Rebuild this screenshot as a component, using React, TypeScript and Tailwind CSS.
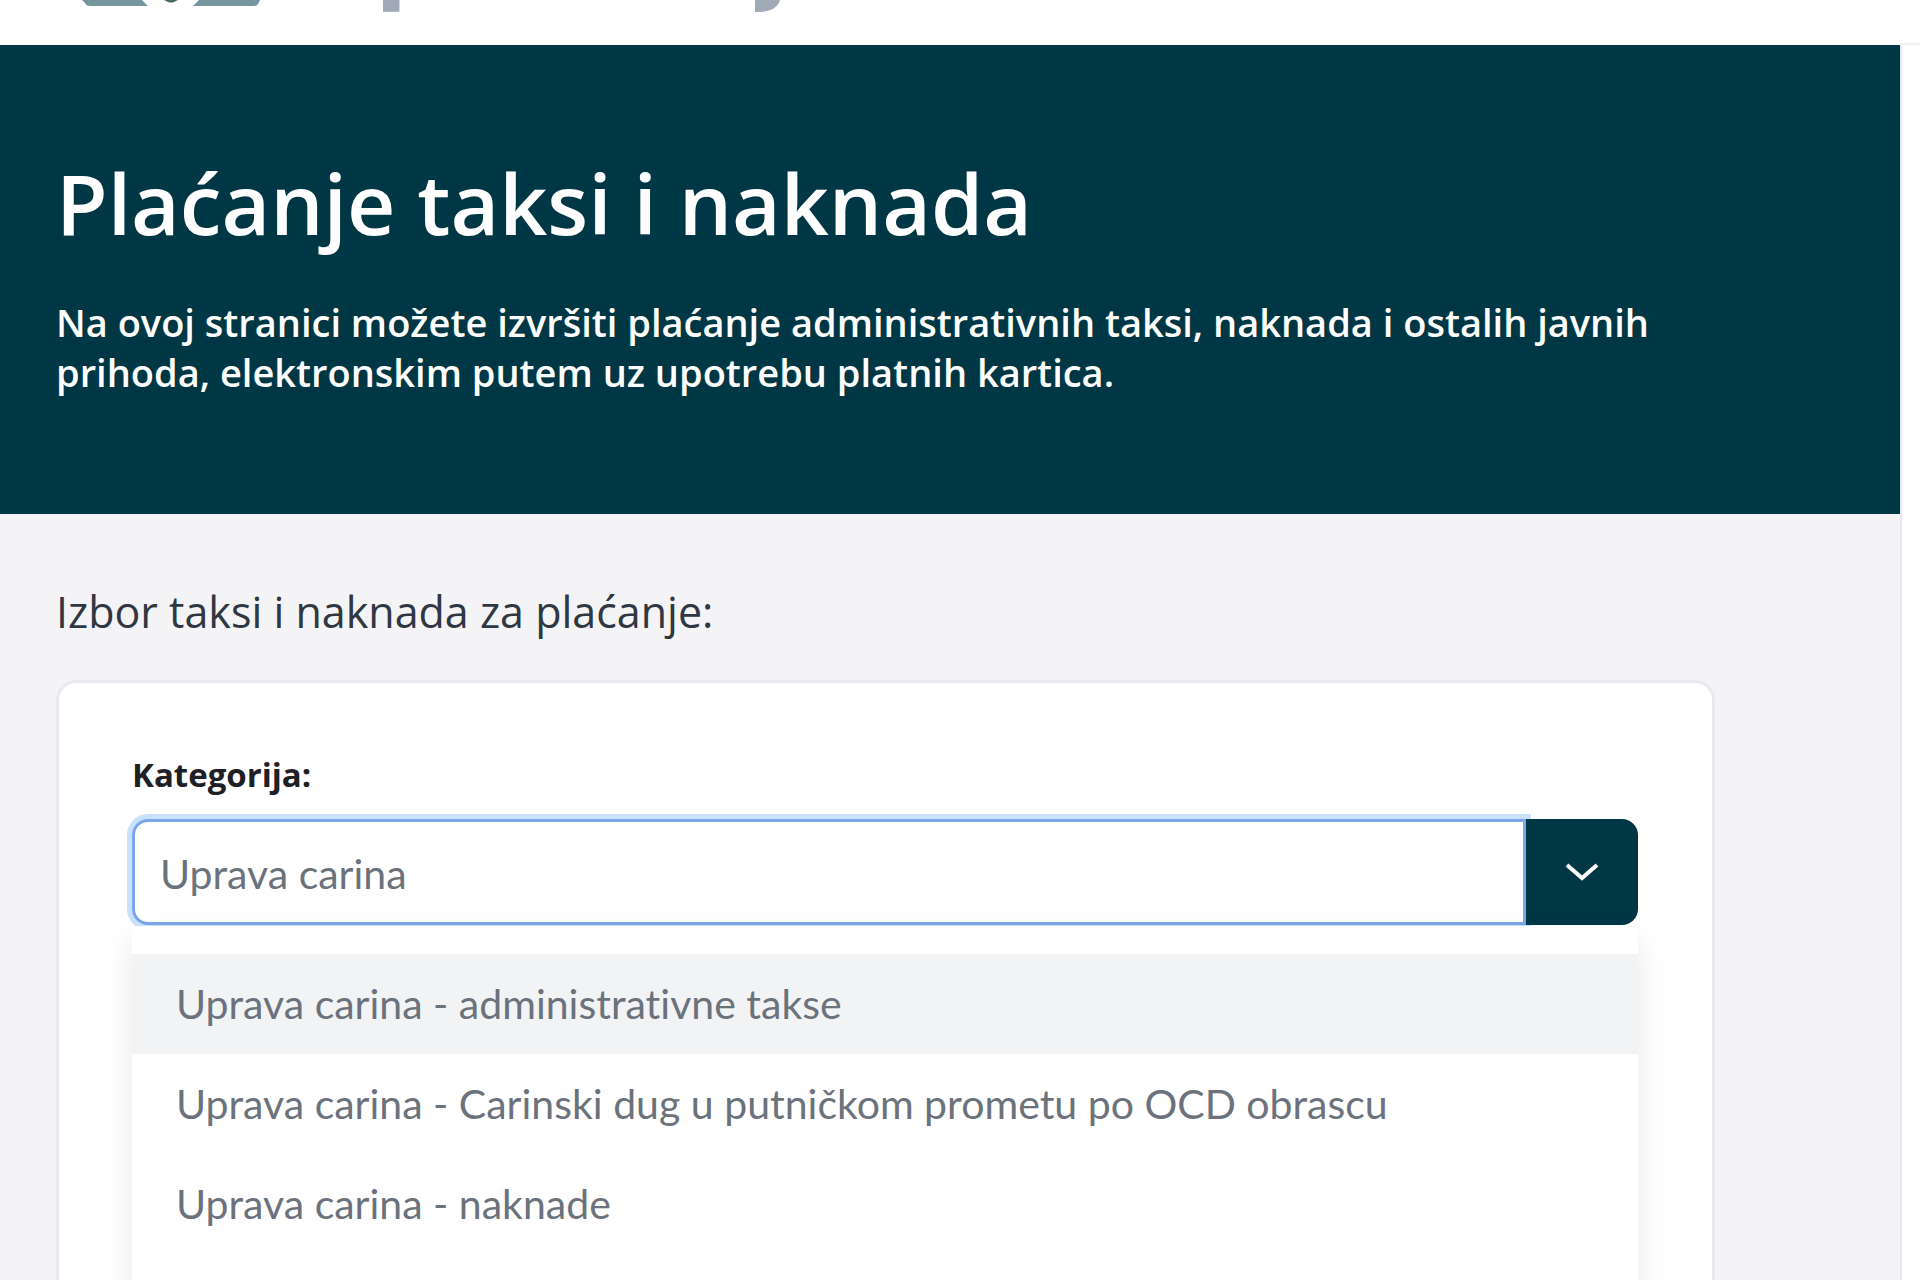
import { useState } from "react";

const CATEGORIES = [
  "Uprava carina - administrativne takse",
  "Uprava carina - Carinski dug u putničkom prometu po OCD obrascu",
  "Uprava carina - naknade",
];

function Logo() {
  return (
    <svg width="180" height="8" viewBox="0 0 180 8" aria-hidden="true">
      <path d="M0 0h60l6 6H8q-4 0-5-3z" fill="#75969e" />
      <path d="M117 0h61l-2 4q-1 2-4 2h-61z" fill="#75969e" />
      <path d="M82 0h14l-4 2q-3 1-6 0z" fill="#4a6a68" />
    </svg>
  );
}

function Header() {
  return (
    <header className="flex h-[45px] shrink-0 items-start overflow-hidden bg-white pl-[82px]">
      <Logo />
      {/* only the descenders of the wordmark reach into the bar */}
      <div
        aria-hidden="true"
        className="-mt-[108px] ml-[114px] flex w-[412px] justify-between font-['Inter',sans-serif] text-[112px] leading-[112px] font-bold text-[#a0a9b6]"
      >
        <span>p</span>
        <span>j</span>
      </div>
    </header>
  );
}

function Hero() {
  return (
    <section className="h-[469px] shrink-0 bg-[#003744] px-14 pt-[110px] text-white">
      <h1 className="font-['Open_Sans',sans-serif] text-[84px] leading-[96px] font-semibold">
        Plaćanje taksi i naknada
      </h1>
      <p className="mt-[46px] font-['Open_Sans',sans-serif] text-[38px] leading-[50px] font-semibold">
        Na ovoj stranici možete izvršiti plaćanje administrativnih taksi, naknada i ostalih javnih
        <br />
        prihoda, elektronskim putem uz upotrebu platnih kartica.
      </p>
    </section>
  );
}

function CategorySelect() {
  const [value, setValue] = useState("Uprava carina");
  const [open, setOpen] = useState(true);

  return (
    <div className="relative">
      <div className="flex h-[106px]">
        <input
          id="category"
          type="text"
          value={value}
          onChange={(e) => setValue(e.target.value)}
          className="min-w-0 flex-1 rounded-l-2xl border-[3px] border-[#7ca5ec] bg-white px-[25px] pt-1 font-['Lato',sans-serif] text-[41px] text-[#6b727c] shadow-[0_0_0_5px_#c9e1fa] outline-none"
        />
        <button
          type="button"
          aria-label="Prikaži kategorije"
          onClick={() => setOpen(!open)}
          className="relative flex w-28 items-center justify-center rounded-r-2xl bg-[#003744] text-white"
        >
          <svg width="36" height="20" viewBox="0 0 36 20" fill="none" aria-hidden="true">
            <path d="M3 3 18 16 33 3" stroke="currentColor" strokeWidth="4" />
          </svg>
        </button>
      </div>
      {open && (
        <ul className="absolute inset-x-0 top-[107px] bg-white pt-7 pb-28 font-['Lato',sans-serif] text-[41px] leading-[100px] text-[#6b727c] shadow-[0_12px_28px_rgba(0,0,0,0.09)] [font-variant-ligatures:none]">
          {CATEGORIES.map((category, i) => (
            <li key={category} className={i === 0 ? "bg-[#f2f3f5]" : ""}>
              <button
                type="button"
                onClick={() => setValue(category)}
                className="block w-full px-11 text-left whitespace-nowrap"
              >
                {category}
              </button>
            </li>
          ))}
        </ul>
      )}
    </div>
  );
}

export default function App() {
  return (
    <div className="flex h-screen overflow-hidden bg-white">
      <div className="flex min-w-0 flex-1 flex-col">
        <Header />
        <Hero />
        <main className="flex flex-1 flex-col bg-[#f4f4f6] pt-[70px] pr-[185px] pl-14">
          <h2 className="font-['Open_Sans',sans-serif] text-[43px] leading-[56px] text-[#2f3742]">
            Izbor taksi i naknada za plaćanje:
          </h2>
          <div className="mt-10 flex-1 rounded-t-[20px] border-[3px] border-b-0 border-[#e8eaf0] bg-white pt-[68px] pr-[74px] pl-[73px]">
            <label
              htmlFor="category"
              className="block font-['Open_Sans',sans-serif] text-[33px] leading-[48px] font-bold text-[#1d2025]"
            >
              Kategorija:
            </label>
            <div className="mt-5">
              <CategorySelect />
            </div>
          </div>
        </main>
      </div>
      <aside className="flex w-5 flex-col">
        <div className="h-[45px] border-b-2 border-[#edf1f5]" />
        <div className="flex-1 border-l-2 border-[#e4e8f1]" />
      </aside>
    </div>
  );
}
